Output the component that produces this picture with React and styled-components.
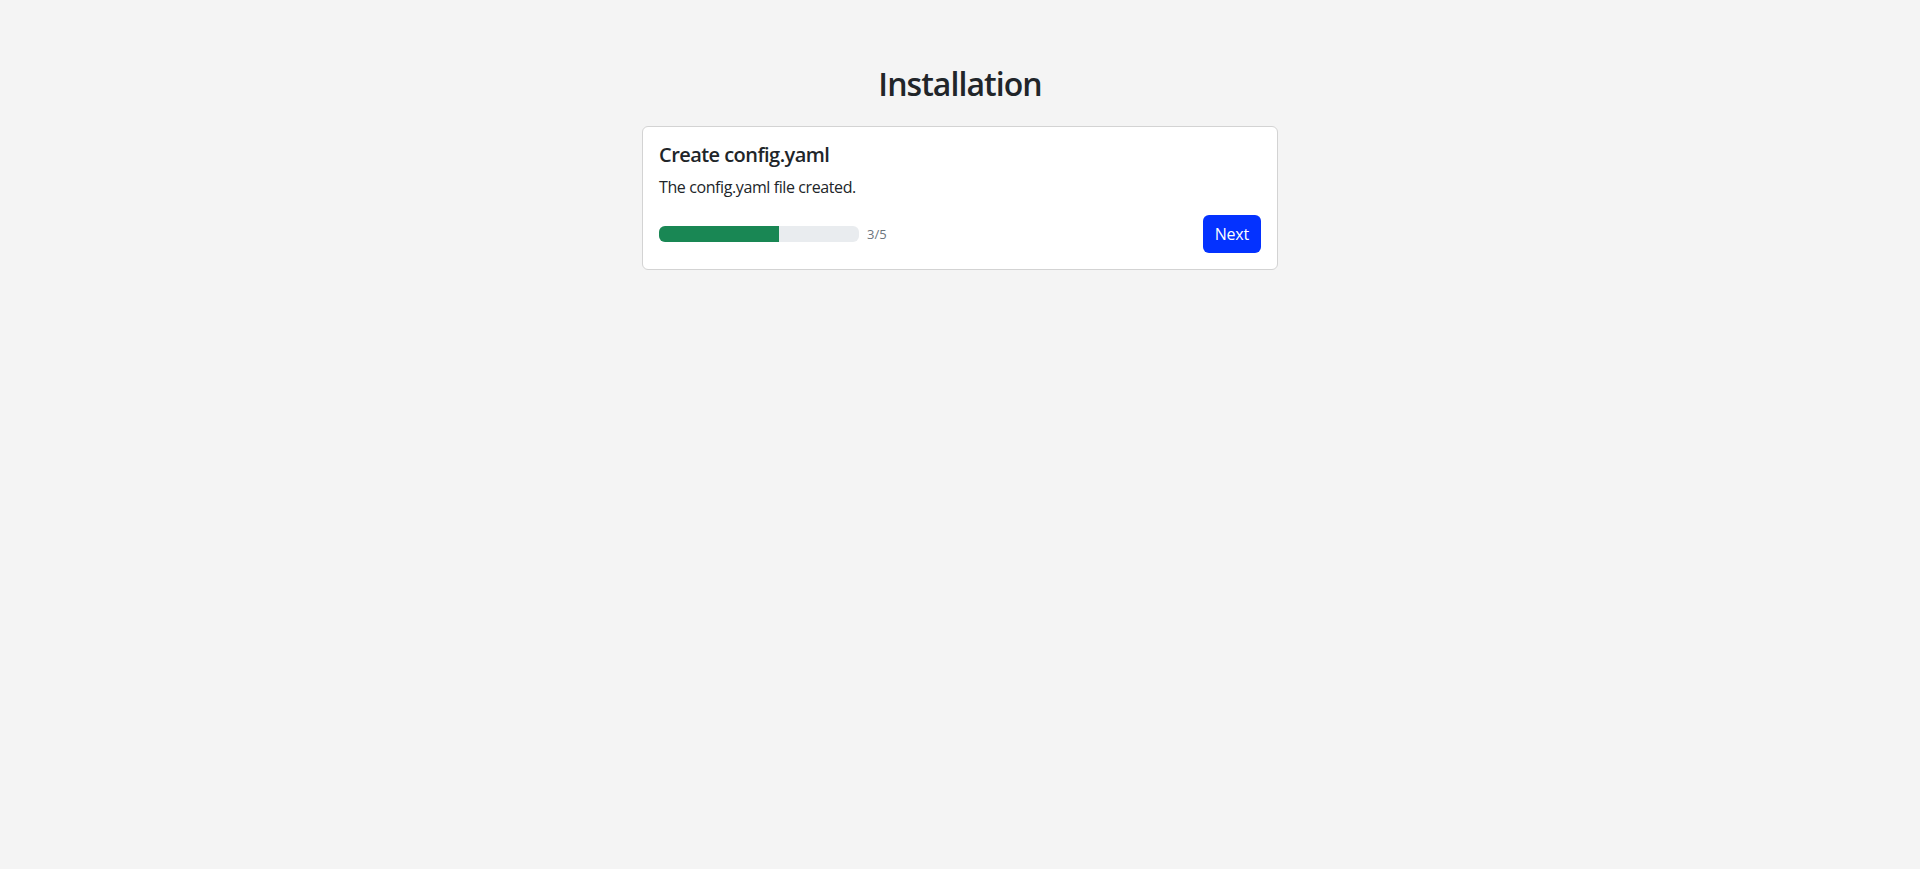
// Installation wizard page: a heading and one step card with a progress bar
import React, { useState } from 'react';
import styled, { createGlobalStyle } from 'styled-components';

const GlobalStyle = createGlobalStyle`
	html, body {
		margin: 0;
		padding: 0;
		background-color: #f4f4f4;
	}
	body {
		font-family: 'Open Sans', 'Noto Sans', 'Liberation Sans', sans-serif;
		color: #212529;
	}
`;

// centers the heading and the card
const Page = styled.div`
	display: flex;
	flex-direction: column;
	align-items: center;
	padding-top: 65px;
	min-height: 100vh;
	box-sizing: border-box;
`;

const Heading = styled.h1`
	margin: 0 0 23px;
	font-size: 32px;
	font-weight: 600;
	line-height: 1.2;
	letter-spacing: -0.95px;
`;

const Card = styled.div`
	width: 636px;
	box-sizing: border-box;
	background-color: #ffffff;
	border: 1px solid #d3d3d3;
	border-radius: 6px;
	padding: 16px;
`;

const CardTitle = styled.h5`
	margin: 0 0 8px;
	font-size: 20px;
	font-weight: 600;
	line-height: 1.2;
	letter-spacing: -0.55px;
`;

const CardText = styled.p`
	margin: 0 0 16px;
	font-size: 16px;
	line-height: 24px;
	letter-spacing: -0.4px;
`;

// the bottom row: progress on the left, button on the right
const Footer = styled.div`
	display: flex;
	align-items: center;
	justify-content: space-between;
`;

const ProgressWrap = styled.div`
	display: flex;
	align-items: center;
	gap: 8px;
`;

const Track = styled.div`
	width: 200px;
	height: 16px;
	border-radius: 6px;
	background-color: #e9ecef;
	overflow: hidden;
`;

const Fill = styled.div`
	height: 100%;
	background-color: #198754;
`;

const Count = styled.span`
	font-size: 13px;
	color: #6c757d;
`;

const Button = styled.button`
	font-family: inherit;
	font-size: 16px;
	line-height: 24px;
	letter-spacing: -0.2px;
	padding: 7px 12px;
	border: none;
	border-radius: 6px;
	background-color: #0432ff;
	color: #ffffff;
	cursor: pointer;
`;

const App = () => {
	const [step, setStep] = useState(3);
	const total = 5;

	return (
		<>
			<GlobalStyle />
			<Page>
				<Heading>Installation</Heading>
				<Card>
					<CardTitle>Create config.yaml</CardTitle>
					<CardText>The config.yaml file created.</CardText>
					<Footer>
						<ProgressWrap>
							<Track>
								<Fill style={{ width: `${(step / total) * 100}%` }} />
							</Track>
							<Count>
								{step}/{total}
							</Count>
						</ProgressWrap>
						<Button onClick={() => setStep((s) => Math.min(s + 1, total))}>
							Next
						</Button>
					</Footer>
				</Card>
			</Page>
		</>
	);
};

export default App;
